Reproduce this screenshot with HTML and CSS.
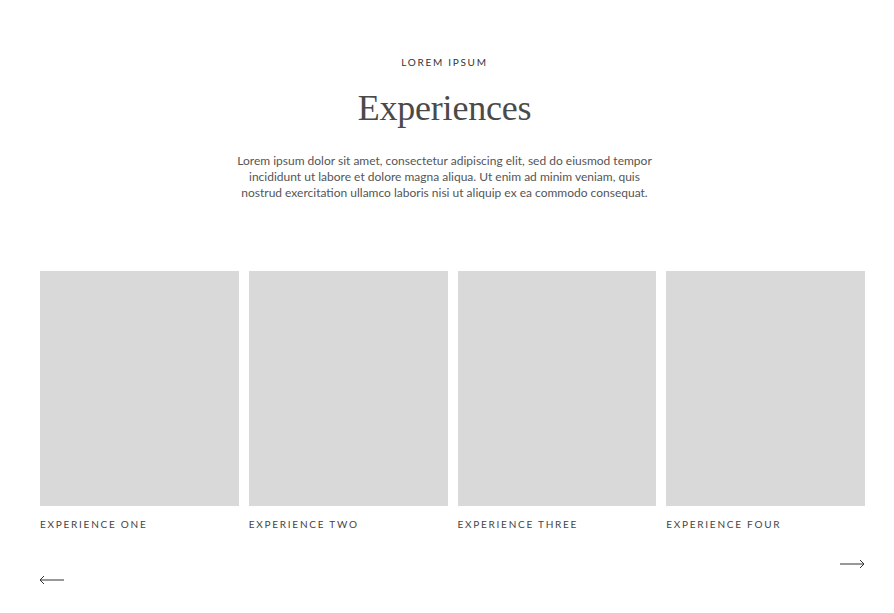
FILE: index.html
```html
<!DOCTYPE html>
<html>
<head>
<meta charset="utf-8">
<link rel="stylesheet" href="styles.css">
</head>
<body>
<section class="exp">
  <header class="intro">
    <p class="eyebrow">LOREM IPSUM</p>
    <h1 class="title">Experiences</h1>
    <p class="lead">Lorem ipsum dolor sit amet, consectetur adipiscing elit, sed do eiusmod tempor<br>incididunt ut labore et dolore magna aliqua. Ut enim ad minim veniam, quis<br>nostrud exercitation ullamco laboris nisi ut aliquip ex ea commodo consequat.</p>
  </header>
  <div class="carousel">
    <div class="cards">
      <div class="card"><div class="thumb"></div><p class="label">EXPERIENCE ONE</p></div>
      <div class="card"><div class="thumb"></div><p class="label">EXPERIENCE TWO</p></div>
      <div class="card"><div class="thumb"></div><p class="label">EXPERIENCE THREE</p></div>
      <div class="card"><div class="thumb"></div><p class="label">EXPERIENCE FOUR</p></div>
    </div>
    <div class="nav">
      <button class="arrow prev" aria-label="Previous">
        <svg width="26" height="10" viewBox="0 0 26 10"><path d="M1 5H25M5 1L1 5L5 9" fill="none" stroke="#333" stroke-width="1"/></svg>
      </button>
      <button class="arrow next" aria-label="Next">
        <svg width="26" height="10" viewBox="0 0 26 10"><path d="M1 5H25M21 1L25 5L21 9" fill="none" stroke="#333" stroke-width="1"/></svg>
      </button>
    </div>
  </div>
</section>
</body>
</html>
```
FILE: styles.css
```css
html, body {
  margin: 0;
  padding: 0;
  background: #fff;
}
body {
  font-family: Lato, "Noto Sans", sans-serif;
  color: #444;
}
.exp {
  padding-top: 56px;
}
.intro {
  display: flex;
  flex-direction: column;
  align-items: center;
  text-align: center;
  padding-right: 5px;
}
.eyebrow {
  margin: 0;
  font-size: 10px;
  line-height: 12px;
  letter-spacing: 1.7px;
  color: #333;
}
.title {
  margin: 18px 0 0 0;
  font-family: "Liberation Serif", "DejaVu Serif", serif;
  font-weight: normal;
  font-size: 36px;
  line-height: 44px;
  color: #4a4a4a;
  letter-spacing: -0.2px;
}
.lead {
  margin: 23px 0 0 0;
  font-size: 12px;
  line-height: 16px;
  color: #555;
  white-space: nowrap;
}
.carousel {
  padding: 0 29px 0 40px;
}
.cards {
  display: flex;
  gap: 10px;
  margin-top: 70px;
}
.card {
  flex: 1 1 0;
  min-width: 0;
}
.thumb {
  height: 235px;
  background: #d9d9d9;
}
.label {
  margin: 12px 0 0 0;
  font-size: 10px;
  line-height: 12px;
  letter-spacing: 1.75px;
  color: #444;
}
.nav {
  display: flex;
  justify-content: space-between;
  align-items: flex-start;
  margin-top: 29px;
}
.arrow {
  background: none;
  border: none;
  padding: 0;
  margin: 0;
  display: block;
  line-height: 0;
}
.prev {
  margin-top: 16px;
  margin-left: -1px;
}
```
